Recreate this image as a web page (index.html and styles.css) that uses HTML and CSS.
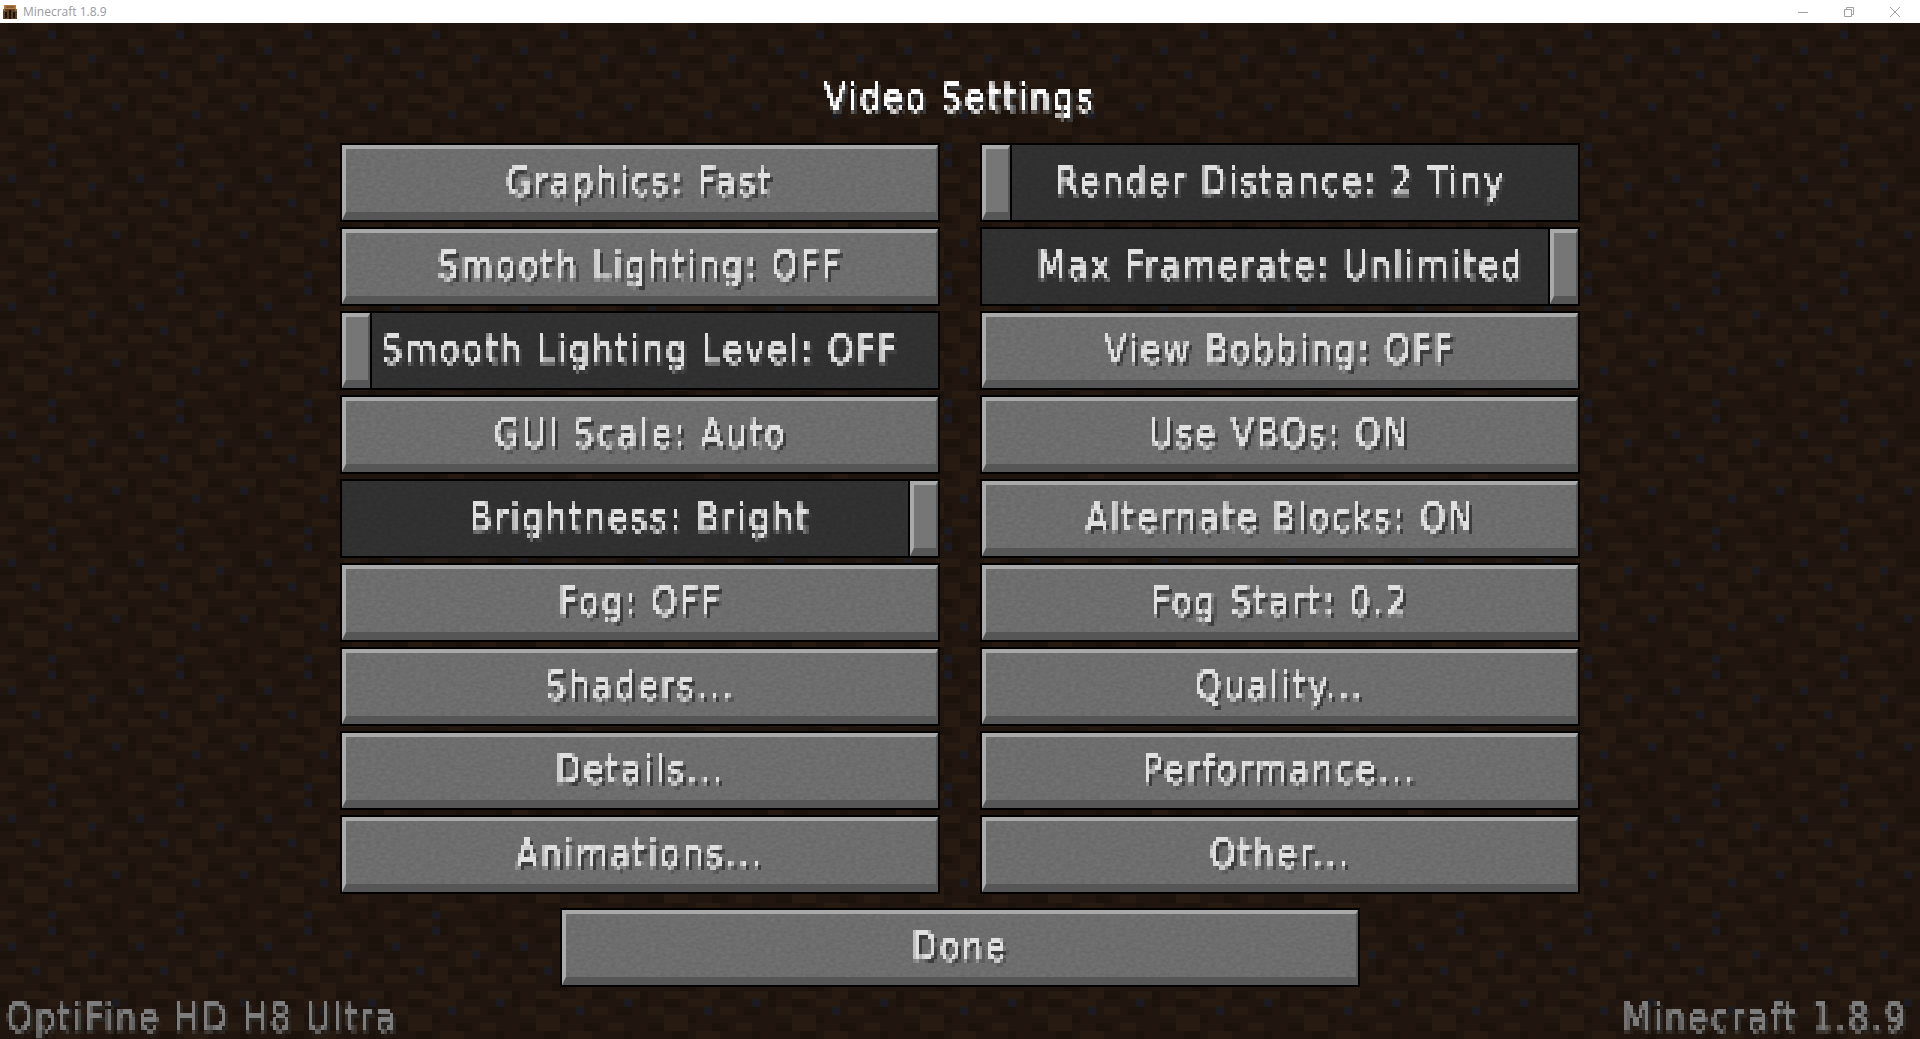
FILE: index.html
```html
<!DOCTYPE html>
<html lang="en">
<head>
  <meta charset="UTF-8" />
  <title>Minecraft 1.8.9</title>
  <link rel="stylesheet" href="styles.css">
</head>
<body>
  <svg class="defs" width="0" height="0">
    <filter id="pixelate" x="-15%" y="-20%" width="130%" height="140%" color-interpolation-filters="sRGB">
      <feFlood x="1" y="2" width="1" height="1" flood-color="#000"/>
      <feComposite width="3" height="4"/>
      <feTile result="grid"/>
      <feComposite in="SourceGraphic" in2="grid" operator="in"/>
      <feMorphology operator="dilate" radius="1 2"/>
    </filter>
  </svg>

  <div class="titlebar">
    <svg class="app-icon" viewBox="0 0 16 16" width="16" height="16" shape-rendering="crispEdges">
      <path fill="#5e4125" d="M1 5h14v10H1z"/>
      <path fill="#b07a42" d="M2 1h12v4H2z"/>
      <path fill="#8a5f30" d="M4 2h8v2H4z"/>
      <path fill="#1c120a" d="M7 6h2v9H7zM3 8h2v6H3zM11 8h2v6h-2z"/>
      <path fill="#9a6a38" d="M1 5h2v2H1zM13 5h2v2h-2z"/>
    </svg>
    <span class="window-title">Minecraft 1.8.9</span>
    <div class="window-controls">
      <svg viewBox="0 0 10 10" width="10" height="10"><path d="M0 5.5h10" stroke="#a0a0a0" fill="none"/></svg>
      <svg viewBox="0 0 10 10" width="10" height="10"><path d="M.5 2.5h7v7h-7zM2.5 2.5v-2h7v7h-2" stroke="#a0a0a0" fill="none"/></svg>
      <svg viewBox="0 0 10 10" width="10" height="10"><path d="M0 0l10 10M10 0L0 10" stroke="#a0a0a0" fill="none"/></svg>
    </div>
  </div>

  <main class="screen">
    <h1 class="screen-title"><span class="px"><span class="mc">Video Settings</span></span></h1>

    <div class="options">
      <div class="btn"><span class="px"><span class="mc">Graphics: Fast</span></span></div>
      <div class="btn slider"><i class="handle"></i><span class="px"><span class="mc">Render Distance: 2 Tiny</span></span></div>

      <div class="btn"><span class="px"><span class="mc">Smooth Lighting: OFF</span></span></div>
      <div class="btn slider"><i class="handle end"></i><span class="px"><span class="mc">Max Framerate: Unlimited</span></span></div>

      <div class="btn slider"><i class="handle"></i><span class="px"><span class="mc">Smooth Lighting Level: OFF</span></span></div>
      <div class="btn"><span class="px"><span class="mc">View Bobbing: OFF</span></span></div>

      <div class="btn"><span class="px"><span class="mc">GUI Scale: Auto</span></span></div>
      <div class="btn"><span class="px"><span class="mc">Use VBOs: ON</span></span></div>

      <div class="btn slider"><i class="handle end"></i><span class="px"><span class="mc">Brightness: Bright</span></span></div>
      <div class="btn"><span class="px"><span class="mc">Alternate Blocks: ON</span></span></div>

      <div class="btn"><span class="px"><span class="mc">Fog: OFF</span></span></div>
      <div class="btn"><span class="px"><span class="mc">Fog Start: 0.2</span></span></div>

      <div class="btn"><span class="px"><span class="mc">Shaders...</span></span></div>
      <div class="btn"><span class="px"><span class="mc">Quality...</span></span></div>

      <div class="btn"><span class="px"><span class="mc">Details...</span></span></div>
      <div class="btn"><span class="px"><span class="mc">Performance...</span></span></div>

      <div class="btn"><span class="px"><span class="mc">Animations...</span></span></div>
      <div class="btn"><span class="px"><span class="mc">Other...</span></span></div>
    </div>

    <div class="btn done"><span class="px"><span class="mc">Done</span></span></div>

    <footer class="versions">
      <span class="px"><span class="mc">OptiFine HD H8 Ultra</span></span>
      <span class="px"><span class="mc">Minecraft 1.8.9</span></span>
    </footer>
  </main>
</body>
</html>
```

FILE: styles.css
```css
* {
  margin: 0;
  padding: 0;
  box-sizing: border-box;
}
html, body {
  height: 100%;
}
body {
  display: flex;
  flex-direction: column;
  overflow: hidden;
  background-color: #20160f;
  font-family: "DejaVu Sans", sans-serif;
}
.defs {
  position: absolute;
}

/* window chrome */
.titlebar {
  flex: 0 0 23px;
  display: flex;
  align-items: center;
  padding-left: 2px;
  background-color: #fff;
}
.app-icon {
  margin-right: 5px;
}
.window-title {
  font-family: "Open Sans", sans-serif;
  font-size: 12px;
  color: #99999f;
}
.window-controls {
  margin-left: auto;
  display: flex;
  gap: 36px;
  padding-right: 20px;
}

/* game screen */
.screen {
  flex: 1;
  display: flex;
  flex-direction: column;
  align-items: center;
  background-color: #20160f;
  background-size: 128px 128px;
  background-image: url("data:image/svg+xml,%3Csvg xmlns='http://www.w3.org/2000/svg' viewBox='0 0 16 16' width='128' height='128' shape-rendering='crispEdges'%3E%3Cpath fill='%231b120b' d='M1 0h2v1H1zM7 0h1v2H7zM12 0h2v1h-2zM3 2h2v1H3zM9 2h1v1H9zM14 2h2v2h-2zM0 4h2v1H0zM6 4h2v1H6zM12 5h1v2h-1zM2 6h1v1H2zM8 6h2v1H8zM15 7h1v1h-1zM5 8h2v1H5zM0 9h1v2H0zM10 9h2v1h-2zM3 10h2v1H3zM13 11h2v1h-2zM6 12h1v1H6zM1 13h2v1H1zM9 13h2v1H9zM4 14h2v1H4zM14 14h1v2h-1zM11 15h2v1h-2z'/%3E%3Cpath fill='%23261a11' d='M4 0h2v1H4zM9 1h3v1H9zM0 2h2v1H0zM5 3h3v1H5zM11 3h2v1h-2zM2 5h3v1H2zM9 4h2v2H9zM14 5h2v1h-2zM6 6h2v2H6zM0 7h3v1H0zM11 7h3v1h-3zM3 9h3v1H3zM8 8h2v2H8zM13 9h3v1h-3zM1 11h2v1H1zM6 10h3v1H6zM10 11h2v1h-2zM3 12h3v2H3zM12 13h2v1h-2zM7 14h3v1H7zM0 15h2v1H0z'/%3E%3Cpath fill='%231c1c20' d='M6 1h1v1H6zM1 3h1v1H1zM11 4h1v1h-1zM4 6h1v1H4zM14 10h1v1h-1zM8 11h1v1H8zM6 15h1v1H6z'/%3E%3C/svg%3E");
}
.screen-title {
  height: 120px;
  display: flex;
  align-items: center;
  justify-content: center;
  padding-top: 30px;
  font-weight: normal;
  font-size: inherit;
  color: #fff;
}
.options {
  display: grid;
  grid-template-columns: 600px 600px;
  grid-auto-rows: 79px;
  column-gap: 40px;
  row-gap: 5px;
}

/* buttons */
.btn {
  position: relative;
  display: flex;
  align-items: center;
  justify-content: center;
  padding-bottom: 2px;
  color: #e0e0e0;
  background-color: #000;
}
.btn::before {
  content: "";
  position: absolute;
  inset: 2px;
  background-color: #737373;
  background-image: url("data:image/svg+xml,%3Csvg xmlns='http://www.w3.org/2000/svg' width='300' height='80'%3E%3Cfilter id='n'%3E%3CfeTurbulence type='fractalNoise' baseFrequency='.2 .35' numOctaves='3'/%3E%3CfeColorMatrix values='0 0 0 0 0 0 0 0 0 0 0 0 0 0 0 0 0 0 .16 -.03'/%3E%3C/filter%3E%3Crect width='300' height='80' filter='url(%23n)'/%3E%3C/svg%3E");
  background-clip: padding-box;
  border-style: solid;
  border-width: 4px 2px 8px 4px;
  border-color: #a9a9a9 #575757 #565656 #a9a9a9;
}
.slider::before {
  background-color: #333;
  border: 0;
}
.handle {
  position: absolute;
  top: 2px;
  bottom: 2px;
  left: 2px;
  width: 28px;
  background-color: #767676;
  background-clip: padding-box;
  border-style: solid;
  border-width: 4px 2px 8px 4px;
  border-color: #a9a9a9 #575757 #565656 #a9a9a9;
  box-shadow: 2px 0 0 #000;
}
.handle.end {
  left: auto;
  right: 2px;
  box-shadow: -2px 0 0 #000;
}
.done {
  width: 800px;
  height: 79px;
  margin-top: 14px;
}

/* pixel text */
.px {
  position: relative;
  display: inline-block;
  filter: url(#pixelate);
}
.mc {
  display: inline-block;
  font-size: 30px;
  line-height: 42px;
  letter-spacing: 2.2px;
  white-space: pre;
  -webkit-text-stroke: 0.5px currentColor;
  text-shadow: 3px 3px 0 #3c3c3c;
  transform: scale(1.1, 1.28);
}
.slider .mc {
  text-shadow: 3px 3px 0 #414141;
}
.versions {
  margin-top: auto;
  width: 100%;
  display: flex;
  justify-content: space-between;
  padding: 0 12px 0 6px;
  color: #7d7d7d;
}
.versions .mc {
  text-shadow: 3px 3px 0 #2a2622;
}
.versions .px:first-child .mc {
  transform-origin: left center;
}
.versions .px:last-child .mc {
  transform-origin: right center;
}
```
